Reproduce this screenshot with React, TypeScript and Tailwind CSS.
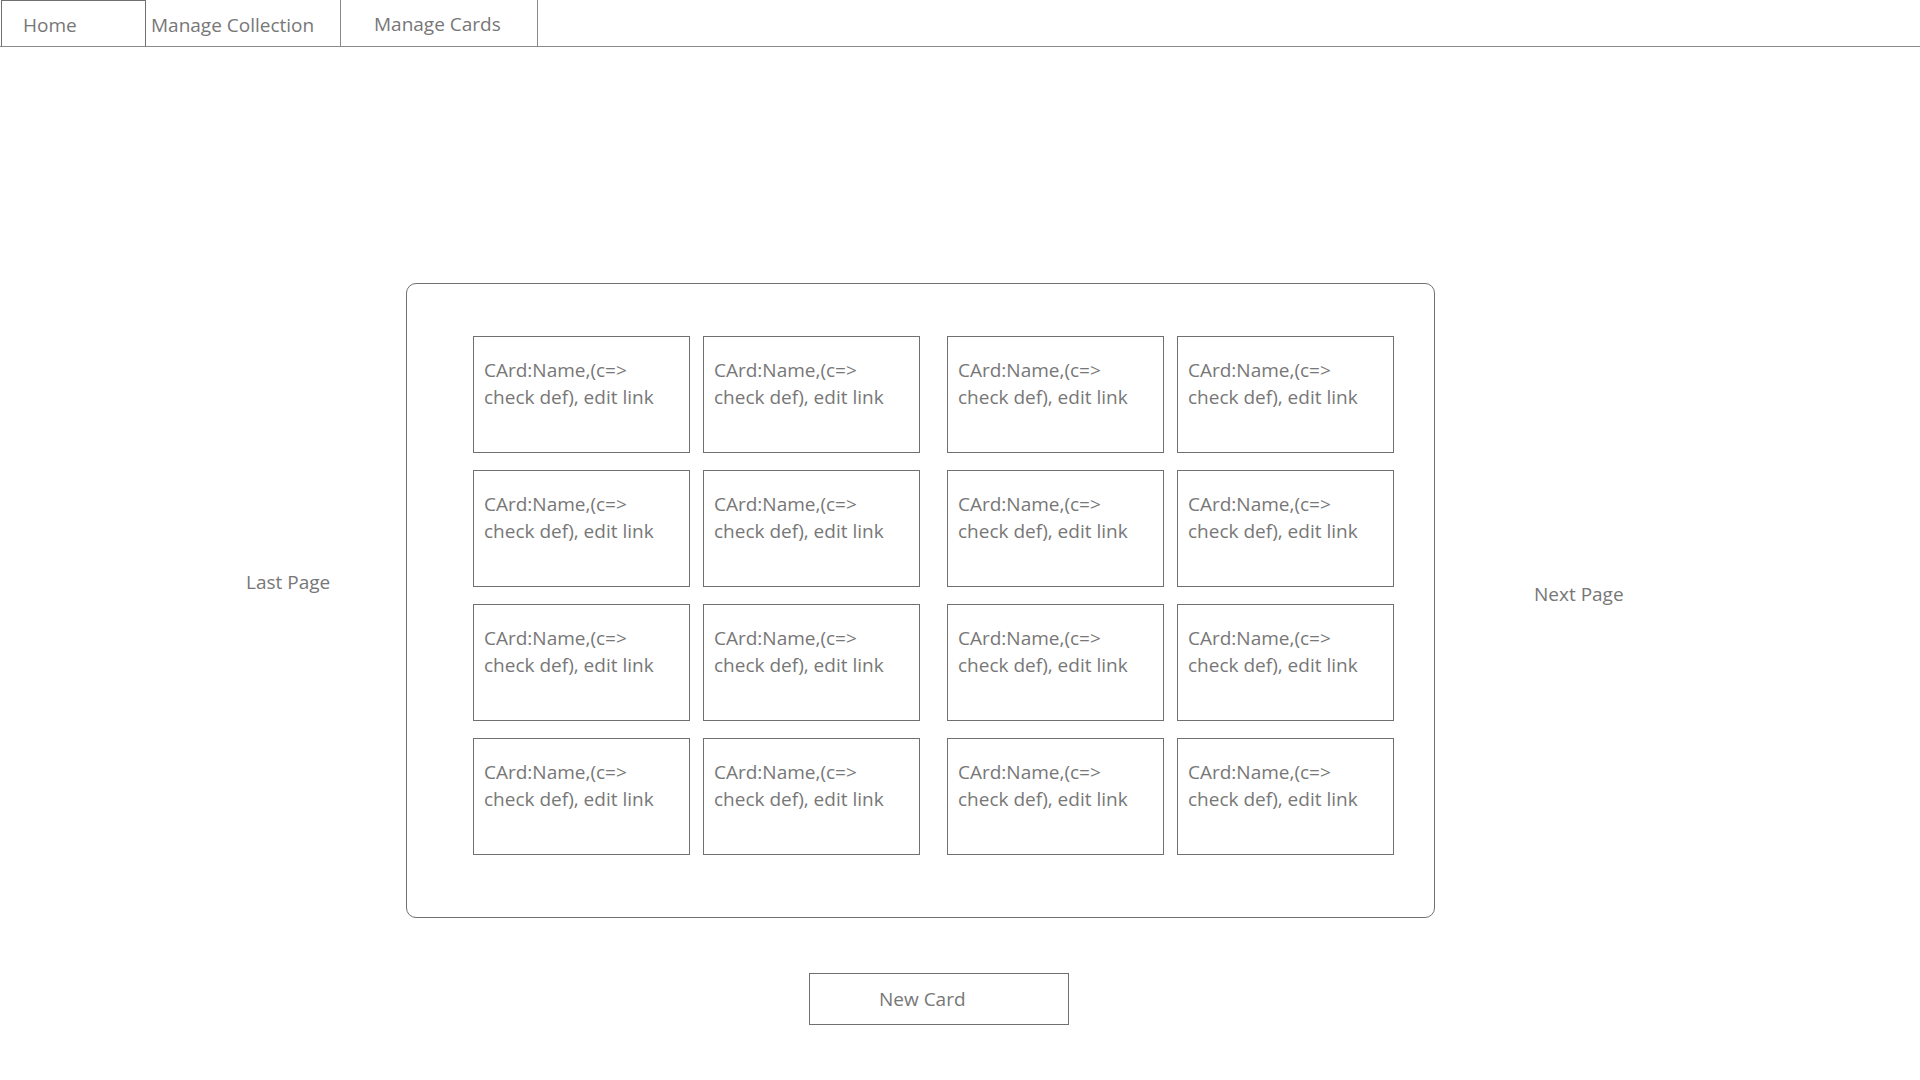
const font = { fontFamily: '"Open Sans", "Noto Sans", sans-serif' };

const cardText = "CArd:Name,(c=> check def), edit link";

function CardTile() {
  return (
    <div className="h-[117px] w-[217px] border border-[#707070] pl-[10px] pt-[20px] text-[19px] leading-[27px] text-[#777777]">
      <p className="w-[190px]">{cardText}</p>
    </div>
  );
}

function CardGroup() {
  return (
    <div className="grid grid-cols-[217px_217px] content-start gap-x-[13px] gap-y-[17px]">
      {Array.from({ length: 8 }).map((_, i) => (
        <CardTile key={i} />
      ))}
    </div>
  );
}

export default function App() {
  return (
    <div className="min-h-screen w-full bg-white text-[#777777]" style={font}>
      <nav className="flex h-[47px] border-b border-[#8a8a8a] text-[19px]">
        <div className="ml-[1px] flex w-[145px] items-center border border-b-0 border-[#707070] pl-[21px] pt-[4px]">
          Home
        </div>
        <div className="flex w-[195px] items-center border-r border-[#8a8a8a] pl-[5px] pt-[4px]">
          Manage Collection
        </div>
        <div className="flex w-[197px] items-center border-r border-[#8a8a8a] pl-[33px] pt-[2px]">
          Manage Cards
        </div>
      </nav>

      <main className="flex items-start pt-[236px]">
        <div className="w-[406px] pl-[246px] pt-[285px] text-[19px]">Last Page</div>

        <section className="flex h-[635px] w-[1029px] items-start gap-x-[27px] rounded-[10px] border border-[#707070] pl-[66px] pt-[52px]">
          <CardGroup />
          <CardGroup />
        </section>

        <div className="pl-[99px] pt-[297px] text-[19px]">Next Page</div>
      </main>

      <div className="pl-[809px] pt-[55px]">
        <button className="h-[52px] w-[260px] border border-[#707070] pl-[69px] text-left text-[19px] text-[#777777]">
          New Card
        </button>
      </div>
    </div>
  );
}
